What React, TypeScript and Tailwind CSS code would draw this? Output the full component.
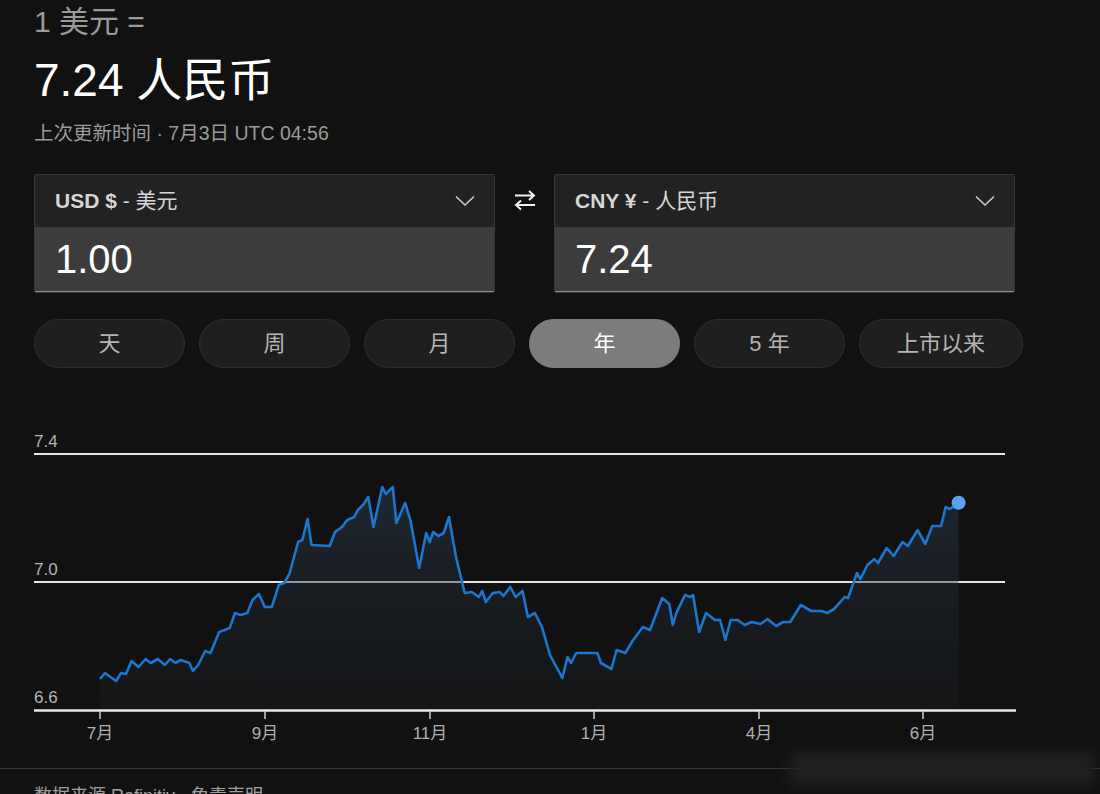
import React from "react";

const ranges = ["天", "周", "月", "年", "5 年", "上市以来"];

// chart points, in page pixels
const line: [number, number][] = [
  [100, 679], [105, 673], [116, 681], [121, 673], [126, 674], [131.5, 661], [138.5, 667], [145.6, 659],
  [150.8, 663], [157.8, 659], [164.9, 665], [170.1, 659], [175.4, 663], [180.6, 660], [189.4, 663],
  [192.9, 671], [198.2, 665], [205.2, 651], [210.5, 653], [219.2, 632], [224.5, 630], [229.7, 628],
  [235, 613], [240.3, 615], [247.3, 613], [252.5, 600], [258.9, 594], [264.8, 607], [271.8, 607],
  [278.8, 585], [284.1, 583], [289.4, 574], [298.1, 542], [302.4, 540], [307.6, 519], [311.5, 545],
  [329.7, 546], [335, 532], [342, 527], [347.2, 520], [354.3, 517], [357.8, 510], [363, 505],
  [368.3, 497], [373.5, 527], [382.3, 487], [385.8, 494], [392.8, 487], [396.4, 523], [405.1, 503],
  [410.4, 520], [419.2, 568], [426.2, 533], [429.7, 542], [433.2, 532], [438.4, 536], [443.7, 533],
  [449, 517], [456, 557], [464.7, 593], [471.8, 592], [478.8, 597], [482.3, 591], [485.8, 602],
  [492.8, 593], [499.8, 592], [503.3, 596], [510.3, 587], [515.6, 597], [522.6, 591], [527.9, 617],
  [534.9, 613], [541.9, 627], [550, 655], [562.3, 678], [567.5, 657], [571, 663], [576.3, 653],
  [597.4, 653], [600.9, 663], [611.4, 669], [616.6, 650], [625.4, 653], [632.4, 641], [642.9, 627],
  [650, 630], [662.2, 598], [669.3, 604], [672.8, 625], [676.3, 613], [685, 595], [690.3, 597],
  [693.1, 595], [699.1, 632], [706.1, 613], [714.9, 620], [720.1, 620], [725.4, 640], [730.6, 620],
  [737.7, 620], [744.7, 625], [751.7, 622], [760.5, 624], [767.5, 619], [776.2, 626], [783.2, 622],
  [790.3, 622], [800.8, 605], [811.3, 611], [821.8, 611], [827.1, 613], [834.1, 609], [844.6, 597],
  [848.1, 598], [856.9, 573], [860.4, 579], [867.4, 565], [874.4, 559], [878, 563], [886.7, 548],
  [893.7, 556], [902.5, 542], [907.8, 546], [917.6, 530], [925.3, 544], [932.3, 526], [941.1, 526],
  [945.6, 507], [949.9, 509], [958.6, 502.7],
];

const ticks = [
  { x: 100, label: "7月" },
  { x: 265, label: "9月" },
  { x: 430, label: "11月" },
  { x: 594, label: "1月" },
  { x: 759, label: "4月" },
  { x: 923, label: "6月" },
];

const font = { fontFamily: '"Liberation Sans", Arial, "Noto Sans CJK SC", sans-serif' };

function Chevron() {
  return (
    <svg width="20" height="12" viewBox="0 0 20 12" fill="none">
      <path d="M1 1.5 L10 10 L19 1.5" stroke="#d0d0d0" strokeWidth="1.5" />
    </svg>
  );
}

function SwapIcon() {
  return (
    <svg width="24" height="24" viewBox="0 0 24 24" fill="none" stroke="#f2f2f2" strokeWidth="2">
      <path d="M2 7.5 H21 M16 3 L21 7.5 L16 12" />
      <path d="M22 17 H3 M8 12.5 L3 17 L8 21.5" />
    </svg>
  );
}

function CurrencyBox({ code, name, value }: { code: string; name: string; value: string }) {
  return (
    <div className="w-[461px] overflow-hidden rounded-[2px] border border-[#363636]">
      <div className="flex h-[52px] items-center justify-between bg-[#222222] pl-[20px] pr-[19px]">
        <div className="text-[21px] text-[#d6d6d6]">
          <span className="font-bold">{code}</span> - {name}
        </div>
        <Chevron />
      </div>
      <div className="flex h-[65px] items-center border-b border-[#8a8a8a] bg-[#3c3c3c] px-[20px] text-[40px] text-white">
        {value}
      </div>
    </div>
  );
}

function Chart() {
  const d = line.map(([x, y], i) => `${i ? "L" : "M"}${x} ${y}`).join(" ");
  const area = `${d} L958.6 710 L100 710 Z`;
  return (
    <svg width="1100" height="340" viewBox="0 420 1100 340" className="block">
      <defs>
        <linearGradient id="fill" x1="0" y1="0" x2="0" y2="1">
          <stop offset="0" stopColor="#2a3a4a" stopOpacity="0.55" />
          <stop offset="1" stopColor="#1c2228" stopOpacity="0.25" />
        </linearGradient>
      </defs>
      <text x="34" y="447" fill="#b4b4b4" fontSize="17" style={font}>7.4</text>
      <text x="34" y="575" fill="#b4b4b4" fontSize="17" style={font}>7.0</text>
      <text x="34" y="703" fill="#b4b4b4" fontSize="17" style={font}>6.6</text>
      <line x1="34" y1="454" x2="1005" y2="454" stroke="#e4e4e4" strokeWidth="2" />
      <line x1="34" y1="582" x2="1005" y2="582" stroke="#e4e4e4" strokeWidth="2" />
      <path d={area} fill="url(#fill)" />
      <line x1="34" y1="710.5" x2="1016" y2="710.5" stroke="#e8e8e8" strokeWidth="2.5" />
      {ticks.map((t) => (
        <g key={t.label}>
          <line x1={t.x} y1="711" x2={t.x} y2="719" stroke="#cfcfcf" strokeWidth="1.5" />
          <text x={t.x} y="739" fill="#b0b0b0" fontSize="17" textAnchor="middle" style={font}>
            {t.label}
          </text>
        </g>
      ))}
      <path d={d} fill="none" stroke="#1b76cc" strokeWidth="2.6" strokeLinejoin="round" />
      <circle cx="958.6" cy="502.7" r="7" fill="#5aa2f0" />
    </svg>
  );
}

export default function App() {
  return (
    <div className="relative h-[794px] w-[1100px] overflow-hidden bg-[#111111]" style={font}>
      <div className="pl-[34px]">
        <div className="pt-[4px] text-[30px] leading-[36px] text-[#9a9a9a]">1 美元 =</div>
        <div className="mt-[13px] text-[46px] leading-[54px] text-white">7.24 人民币</div>
        <div className="mt-[14px] text-[19.5px] leading-[24px] text-[#9a9a9a]">上次更新时间 · 7月3日 UTC 04:56</div>

        <div className="mt-[29px] flex items-start">
          <CurrencyBox code="USD $" name="美元" value="1.00" />
          <div className="flex h-[52px] w-[59px] items-center justify-center">
            <SwapIcon />
          </div>
          <CurrencyBox code="CNY ¥" name="人民币" value="7.24" />
        </div>

        <div className="mt-[26px] flex gap-[14px]">
          {ranges.map((r) => (
            <div
              key={r}
              className={`flex h-[49px] items-center justify-center rounded-full border text-[22px] ${
                r === "上市以来" ? "w-[164px]" : "w-[151px]"
              } ${
                r === "年"
                  ? "border-[#7c7c7c] bg-[#7c7c7c] text-white"
                  : "border-[#2e2e2e] bg-[#1f1f1f] text-[#b4b4b4]"
              }`}
            >
              {r}
            </div>
          ))}
        </div>
      </div>

      <div className="mt-[52px]">
        <Chart />
      </div>

      <div className="mt-[8px] h-px bg-[#3a3a3a]" />
      <div className="mt-[15px] pl-[34px] text-[18px] leading-[24px] text-[#a0a0a0]">
        数据来源 Refinitiv · 免责声明
      </div>

      {/* blurred watermark */}
      <div className="absolute left-[790px] top-[752px] h-[34px] w-[305px] rounded-sm bg-[#202020] blur-[6px]" />
    </div>
  );
}
